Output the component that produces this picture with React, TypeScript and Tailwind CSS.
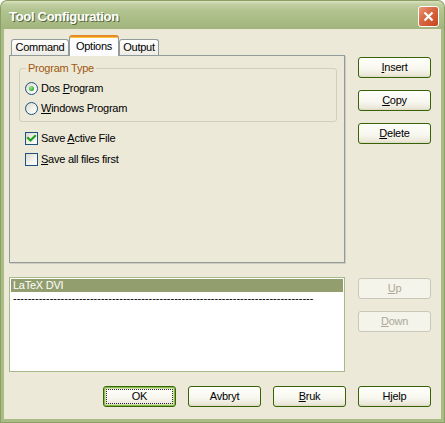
import type {ReactNode} from 'react';

type BtnKind = 'normal' | 'disabled' | 'default';

function XPButton({children, kind = 'normal'}: {children: ReactNode; kind?: BtnKind}) {
  const look =
    kind === 'disabled'
      ? 'border-[#c9c7ba] bg-[#f5f4ea] text-[#aca899]'
      : kind === 'default'
        ? 'border-[#376206] bg-[linear-gradient(to_bottom,#fffffb_0%,#f7f6ee_60%,#ebe8d9_90%,#dcd8c3_100%)] shadow-[inset_0_0_0_1px_#86bb48,inset_0_0_0_2px_#cfe6a8] outline-1 outline-dotted outline-[#3a1850] outline-offset-[-4px]'
        : 'border-[#376206] bg-[linear-gradient(to_bottom,#fffffb_0%,#f7f6ee_60%,#ebe8d9_90%,#dcd8c3_100%)]';
  return (
    <button
      type="button"
      className={`w-[73px] h-[21px] shrink-0 flex items-center justify-center rounded-[3px] border leading-[13px] ${look}`}
    >
      {children}
    </button>
  );
}

function U({children}: {children: ReactNode}) {
  return <span className="underline underline-offset-[1px] decoration-1">{children}</span>;
}

function Radio({checked, children}: {checked?: boolean; children: ReactNode}) {
  return (
    <div className="flex items-center gap-[3px] h-[13px]">
      <span className="w-[13px] h-[13px] rounded-full border border-[#1c5180] bg-[linear-gradient(135deg,#dcd9cb_0%,#f3f2ec_55%,#ffffff_100%)] flex items-center justify-center">
        {checked && (
          <span className="w-[5px] h-[5px] rounded-full bg-[radial-gradient(circle_at_40%_35%,#a6e7a2_0%,#3cbb3c_55%,#1f8a1f_100%)]" />
        )}
      </span>
      <span className="leading-[13px]">{children}</span>
    </div>
  );
}

function Check({checked, children}: {checked?: boolean; children: ReactNode}) {
  return (
    <div className="flex items-center gap-[3px] h-[13px]">
      <span className="w-[13px] h-[13px] border border-[#1c5180] bg-[linear-gradient(135deg,#dcd9cb_0%,#f3f2ec_55%,#ffffff_100%)] flex items-center justify-center">
        {checked && (
          <svg width="11" height="11" viewBox="0 0 11 11">
            <polyline
              points="2,5 4.5,7.5 9,3"
              fill="none"
              stroke="#21a121"
              strokeWidth="2.2"
              strokeLinecap="square"
            />
          </svg>
        )}
      </span>
      <span className="leading-[13px]">{children}</span>
    </div>
  );
}

function Tab({label, active}: {label: string; active?: boolean}) {
  if (active) {
    return (
      <div className="relative z-10 -mb-px h-[21px] w-[50px] flex items-center justify-center pb-[1px] rounded-t-[3px] border-x border-[#919b9c] border-t-2 border-t-[#e68b2c] bg-[#fcfcfe] shadow-[inset_0_1px_0_#ffc73c]">
        {label}
      </div>
    );
  }
  return (
    <div className="h-[16px] flex items-center justify-center rounded-t-[3px] border-x border-t border-[#919b9c] bg-[linear-gradient(to_bottom,#ffffff,#f3f2ec_70%,#ecebe5)] px-[5px]">
      {label}
    </div>
  );
}

export default function App() {
  return (
    <div className="w-[445px] h-[423px] flex flex-col bg-white text-black text-[11px] tracking-[-0.25px] font-['Liberation_Sans',Arial,sans-serif]">
      {/* title bar */}
      <div className="h-[29px] shrink-0 flex items-center justify-between pl-[8px] pr-[5px] pt-[3px] rounded-t-[7px] border-x border-t border-[#8b9f66] bg-[linear-gradient(to_bottom,#dbe3c0_0%,#c0cea0_12%,#b1c38f_35%,#a9bc85_70%,#a2b47c_100%)]">
        <span className="text-white font-bold text-[13px] tracking-[-0.3px] [text-shadow:1px_1px_0_#56663a]">
          Tool Configuration
        </span>
        <div className="w-[21px] h-[21px] rounded-[3px] border border-white bg-[linear-gradient(135deg,#ea9a78_0%,#da6a45_40%,#c6461f_100%)] flex items-center justify-center">
          <svg width="13" height="13" viewBox="0 0 13 13">
            <path d="M2.5 2.5 L10.5 10.5 M10.5 2.5 L2.5 10.5" stroke="#fff" strokeWidth="2.2" />
          </svg>
        </div>
      </div>

      {/* frame */}
      <div className="flex-1 flex flex-col border-x border-b border-[#8b9f66]">
        <div className="flex-1 flex flex-col border-x-[3px] border-b-[3px] border-[#a9bc85] bg-[#ece9d8] pt-[6px]">
          {/* tabs + side buttons */}
          <div className="flex pl-[5px]">
            <div className="w-[336px] flex flex-col">
              <div className="h-[20px] flex items-end pl-[2px]">
                <div className="w-[58px]">
                  <Tab label="Command" />
                </div>
                <Tab label="Options" active />
                <div className="w-[40px]">
                  <Tab label="Output" />
                </div>
              </div>
              <div className="h-[208px] border border-[#919b9c] shadow-[1px_1px_0_#d0cdbe] pl-[9px] pr-[7px] pt-[6px] flex flex-col">
                <fieldset className="border border-[#d0d0bf] rounded-[3px] pl-[5px] pt-[7px] pb-[6px] flex flex-col gap-[7px]">
                  <legend className="ml-[1px] px-[2px] leading-[13px] text-[#a0580f]">Program Type</legend>
                  <Radio checked>
                    Dos <U>P</U>rogram
                  </Radio>
                  <Radio>
                    <U>W</U>indows Program
                  </Radio>
                </fieldset>
                <div className="mt-[10px] ml-[6px] flex flex-col gap-[8px]">
                  <Check checked>
                    Save <U>A</U>ctive File
                  </Check>
                  <Check>
                    <U>S</U>ave all files first
                  </Check>
                </div>
              </div>
            </div>
            <div className="ml-[13px] pt-[22px] flex flex-col gap-[12px]">
              <XPButton>
                <U>I</U>nsert
              </XPButton>
              <XPButton>
                <U>C</U>opy
              </XPButton>
              <XPButton>
                <U>D</U>elete
              </XPButton>
            </div>
          </div>

          {/* tool list + up/down */}
          <div className="flex pl-[5px] mt-[14px]">
            <div className="w-[336px] h-[95px] border border-[#a5b98a] bg-white p-[1px] leading-[13px]">
              <div className="h-[13px] bg-[#939e6f] text-white pl-[2px]">LaTeX DVI</div>
              <div className="h-[13px] pl-[2px] tracking-normal overflow-hidden whitespace-nowrap">
                ----------------------------------------------------------------------------------
              </div>
            </div>
            <div className="ml-[13px] pt-[1px] flex flex-col gap-[12px]">
              <XPButton kind="disabled">
                <U>U</U>p
              </XPButton>
              <XPButton kind="disabled">
                <U>D</U>own
              </XPButton>
            </div>
          </div>

          {/* dialog buttons */}
          <div className="flex justify-end gap-[12px] pr-[10px] mt-[14px]">
            <XPButton kind="default">OK</XPButton>
            <XPButton>Avbryt</XPButton>
            <XPButton>
              <U>B</U>ruk
            </XPButton>
            <XPButton>Hjelp</XPButton>
          </div>
        </div>
      </div>
    </div>
  );
}
